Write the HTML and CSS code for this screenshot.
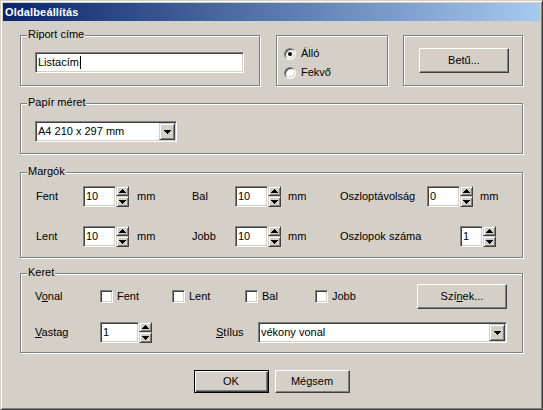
FILE: index.html
```html
<!DOCTYPE html>
<html lang="hu">
<head>
<meta charset="utf-8">
<title>Oldalbeállítás</title>
<link rel="stylesheet" href="styles.css">
</head>
<body>
<div class="window">
  <div class="titlebar">Oldalbeállítás</div>
  <div class="content">
    <div class="row-top">
      <div class="group g-title">
        <span class="legend">Riport címe</span>
        <div class="edit edit-title"><span>Listacím</span><span class="caret"></span></div>
      </div>
      <div class="group g-orient">
        <div class="radio-row"><span class="radio checked"></span><span>Álló</span></div>
        <div class="radio-row"><span class="radio"></span><span>Fekvő</span></div>
      </div>
      <div class="group g-font">
        <div class="btn btn-wide">Betű...</div>
      </div>
    </div>

    <div class="group g-paper">
      <span class="legend">Papír méret</span>
      <div class="combo combo-paper">
        <span class="combo-text">A4 210 x 297 mm</span>
        <span class="drop"><svg width="7" height="4" viewBox="0 0 7 4"><path d="M0 0h7v1h-7z M1 1h5v1h-5z M2 2h3v1h-3z M3 3h1v1h-1z"/></svg></span>
      </div>
    </div>

    <div class="group g-margins">
      <span class="legend">Margók</span>
      <div class="mgrid">
        <span>Fent</span>
        <div class="spin"><div class="edit w33">10</div><div class="ud"><div class="ub up"><svg width="7" height="4" viewBox="0 0 7 4"><path d="M3 0h1v1h-1z M2 1h3v1h-3z M1 2h5v1h-5z M0 3h7v1h-7z"/></svg></div><div class="ub dn"><svg width="7" height="4" viewBox="0 0 7 4"><path d="M0 0h7v1h-7z M1 1h5v1h-5z M2 2h3v1h-3z M3 3h1v1h-1z"/></svg></div></div></div>
        <span>mm</span>
        <span>Bal</span>
        <div class="spin"><div class="edit w33">10</div><div class="ud"><div class="ub up"><svg width="7" height="4" viewBox="0 0 7 4"><path d="M3 0h1v1h-1z M2 1h3v1h-3z M1 2h5v1h-5z M0 3h7v1h-7z"/></svg></div><div class="ub dn"><svg width="7" height="4" viewBox="0 0 7 4"><path d="M0 0h7v1h-7z M1 1h5v1h-5z M2 2h3v1h-3z M3 3h1v1h-1z"/></svg></div></div></div>
        <span>mm</span>
        <span>Oszloptávolság</span>
        <div class="spin"><div class="edit w33">0</div><div class="ud"><div class="ub up"><svg width="7" height="4" viewBox="0 0 7 4"><path d="M3 0h1v1h-1z M2 1h3v1h-3z M1 2h5v1h-5z M0 3h7v1h-7z"/></svg></div><div class="ub dn"><svg width="7" height="4" viewBox="0 0 7 4"><path d="M0 0h7v1h-7z M1 1h5v1h-5z M2 2h3v1h-3z M3 3h1v1h-1z"/></svg></div></div></div>
        <span>mm</span>

        <span>Lent</span>
        <div class="spin"><div class="edit w33">10</div><div class="ud"><div class="ub up"><svg width="7" height="4" viewBox="0 0 7 4"><path d="M3 0h1v1h-1z M2 1h3v1h-3z M1 2h5v1h-5z M0 3h7v1h-7z"/></svg></div><div class="ub dn"><svg width="7" height="4" viewBox="0 0 7 4"><path d="M0 0h7v1h-7z M1 1h5v1h-5z M2 2h3v1h-3z M3 3h1v1h-1z"/></svg></div></div></div>
        <span>mm</span>
        <span>Jobb</span>
        <div class="spin"><div class="edit w33">10</div><div class="ud"><div class="ub up"><svg width="7" height="4" viewBox="0 0 7 4"><path d="M3 0h1v1h-1z M2 1h3v1h-3z M1 2h5v1h-5z M0 3h7v1h-7z"/></svg></div><div class="ub dn"><svg width="7" height="4" viewBox="0 0 7 4"><path d="M0 0h7v1h-7z M1 1h5v1h-5z M2 2h3v1h-3z M3 3h1v1h-1z"/></svg></div></div></div>
        <span>mm</span>
        <span>Oszlopok száma</span>
        <div class="spin spin-cols"><div class="edit w23">1</div><div class="ud"><div class="ub up"><svg width="7" height="4" viewBox="0 0 7 4"><path d="M3 0h1v1h-1z M2 1h3v1h-3z M1 2h5v1h-5z M0 3h7v1h-7z"/></svg></div><div class="ub dn"><svg width="7" height="4" viewBox="0 0 7 4"><path d="M0 0h7v1h-7z M1 1h5v1h-5z M2 2h3v1h-3z M3 3h1v1h-1z"/></svg></div></div></div>
      </div>
    </div>

    <div class="group g-border">
      <span class="legend">Keret</span>
      <div class="krow krow1">
        <span class="klabel">V<u>o</u>nal</span>
        <div class="cb cb1"><span class="check"></span><span>Fent</span></div>
        <div class="cb cb2"><span class="check"></span><span>Lent</span></div>
        <div class="cb cb3"><span class="check"></span><span>Bal</span></div>
        <div class="cb cb4"><span class="check"></span><span>Jobb</span></div>
        <div class="btn btn-wide">Szí<u>n</u>ek...</div>
      </div>
      <div class="krow krow2">
        <span class="klabel"><u>V</u>astag</span>
        <div class="spin"><div class="edit w39">1</div><div class="ud"><div class="ub up"><svg width="7" height="4" viewBox="0 0 7 4"><path d="M3 0h1v1h-1z M2 1h3v1h-3z M1 2h5v1h-5z M0 3h7v1h-7z"/></svg></div><div class="ub dn"><svg width="7" height="4" viewBox="0 0 7 4"><path d="M0 0h7v1h-7z M1 1h5v1h-5z M2 2h3v1h-3z M3 3h1v1h-1z"/></svg></div></div></div>
        <span class="stlabel"><u>S</u>tílus</span>
        <div class="combo combo-style">
          <span class="combo-text">vékony vonal</span>
          <span class="drop"><svg width="7" height="4" viewBox="0 0 7 4"><path d="M0 0h7v1h-7z M1 1h5v1h-5z M2 2h3v1h-3z M3 3h1v1h-1z"/></svg></span>
        </div>
      </div>
    </div>

    <div class="buttons">
      <div class="btn btn-def">OK</div>
      <div class="btn btn-std">Mégsem</div>
    </div>
  </div>
</div>
</body>
</html>
```
FILE: styles.css
```css
* { box-sizing: border-box; margin: 0; padding: 0; }
html, body { width: 543px; height: 410px; overflow: hidden; }
body {
  background: #d4d0c8;
  font-family: "Liberation Sans", Arial, sans-serif;
  font-size: 11px;
  line-height: 13px;
  color: #000;
}
u { text-underline-offset: 1px; }

.window {
  width: 543px;
  height: 410px;
  background: #d4d0c8;
  border: 1px solid;
  border-color: #d4d0c8 #404040 #404040 #d4d0c8;
  box-shadow: inset 1px 1px 0 #fff, inset -1px -1px 0 #808080;
  padding: 2px;
}
.titlebar {
  height: 18px;
  background: linear-gradient(to right, #0a246a, #a6caf0);
  color: #fff;
  font-weight: bold;
  line-height: 18px;
  padding-left: 2px;
  letter-spacing: 0.15px;
}
.content { padding: 14px 17px 0; }

.group {
  position: relative;
  border: 1px solid #808080;
  box-shadow: inset 1px 1px 0 #fff, 1px 1px 0 #fff;
}
.legend {
  position: absolute;
  top: -8px;
  left: 6px;
  padding: 0 1px;
  background: #d4d0c8;
  white-space: nowrap;
}

.row-top { display: flex; height: 51px; }
.g-title { width: 240px; height: 51px; padding: 16px 0 0 14px; }
.g-orient { width: 112px; height: 51px; margin-left: 16px; padding: 11px 0 0 7px; }
.g-font { width: 120px; height: 51px; margin-left: 15px; padding: 12px 0 0 15px; }
.g-paper { height: 51px; margin-top: 17px; padding: 17px 0 0 14px; }
.g-margins { height: 86px; margin-top: 18px; padding: 13px 0 0 15px; }
.g-border { height: 80px; margin-top: 15px; padding: 10px 0 0 14px; }

.edit {
  flex: none;
  background: #fff;
  border: 1px solid;
  border-color: #808080 #fff #fff #808080;
  box-shadow: inset 1px 1px 0 #404040, inset -1px -1px 0 #d4d0c8;
  height: 21px;
  padding: 0 2px;
  display: flex;
  align-items: center;
  white-space: nowrap;
}
.edit-title { width: 209px; }
.caret { width: 1px; height: 13px; background: #000; margin-left: 1px; }
.w33 { width: 33px; }
.w23 { width: 23px; }
.w39 { width: 39px; }

.radio-row { display: flex; align-items: center; gap: 5px; height: 13px; }
.radio-row + .radio-row { margin-top: 6px; }
.radio {
  position: relative;
  flex: none;
  width: 12px;
  height: 12px;
  border-radius: 50%;
  background: #fff;
  border: 1px solid;
  border-color: #808080 #fff #fff #808080;
  box-shadow: inset 1px 1px 0 #404040, inset -1px -1px 0 #d4d0c8;
}
.radio.checked::after {
  content: "";
  position: absolute;
  left: 3px;
  top: 3px;
  width: 4px;
  height: 4px;
  border-radius: 50%;
  background: #000;
}

.check {
  flex: none;
  width: 13px;
  height: 13px;
  background: #fff;
  border: 1px solid;
  border-color: #808080 #fff #fff #808080;
  box-shadow: inset 1px 1px 0 #404040, inset -1px -1px 0 #d4d0c8;
}

.btn {
  flex: none;
  display: flex;
  align-items: center;
  justify-content: center;
  background: #d4d0c8;
  border: 1px solid;
  border-color: #fff #404040 #404040 #fff;
  box-shadow: inset -1px -1px 0 #808080;
}
.btn-wide { width: 90px; height: 25px; }
.btn-std { width: 75px; height: 23px; }
.btn-def {
  width: 75px;
  height: 23px;
  border: 1px solid #000;
  box-shadow: inset 1px 1px 0 #fff, inset -1px -1px 0 #404040, inset -2px -2px 0 #808080;
}

.combo {
  flex: none;
  display: flex;
  height: 21px;
  background: #fff;
  border: 1px solid;
  border-color: #808080 #fff #fff #808080;
  box-shadow: inset 1px 1px 0 #404040, inset -1px -1px 0 #d4d0c8;
  padding: 1px;
}
.combo-paper { width: 142px; }
.combo-style { width: 249px; }
.combo-text { flex: 1; padding-left: 1px; display: flex; align-items: center; white-space: nowrap; }
.drop {
  flex: none;
  width: 16px;
  height: 17px;
  background: #d4d0c8;
  border: 1px solid;
  border-color: #d4d0c8 #404040 #404040 #d4d0c8;
  box-shadow: inset 1px 1px 0 #fff, inset -1px -1px 0 #808080;
  display: flex;
  align-items: center;
  justify-content: center;
}
svg { display: block; fill: #000; }

.spin { display: flex; }
.ud { flex: none; display: flex; flex-direction: column; width: 13px; height: 21px; }
.ub {
  background: #d4d0c8;
  border: 1px solid;
  border-color: #d4d0c8 #404040 #404040 #d4d0c8;
  box-shadow: inset 1px 1px 0 #fff, inset -1px -1px 0 #808080;
  display: flex;
  align-items: center;
  justify-content: center;
}
.ub.up { height: 10px; }
.ub.dn { height: 11px; }

.mgrid {
  display: grid;
  grid-template-columns: 47px 54px 55px 43px 53px 52px 87px 53px auto;
  grid-template-rows: 21px 21px;
  row-gap: 19px;
  align-items: center;
}
.spin-cols { margin-left: 33px; grid-column: span 2; }

.krow { display: flex; align-items: center; }
.krow1 { height: 25px; }
.krow2 { height: 21px; margin-top: 13px; }
.klabel { width: 65px; flex: none; }
.cb { display: flex; align-items: center; gap: 4px; flex: none; }
.cb1 { width: 72px; }
.cb2 { width: 73px; }
.cb3 { width: 70px; }
.cb4 { width: 102px; }
.stlabel { margin-left: 64px; width: 42px; flex: none; }

.buttons { display: flex; justify-content: center; gap: 6px; margin-top: 17px; }
```
